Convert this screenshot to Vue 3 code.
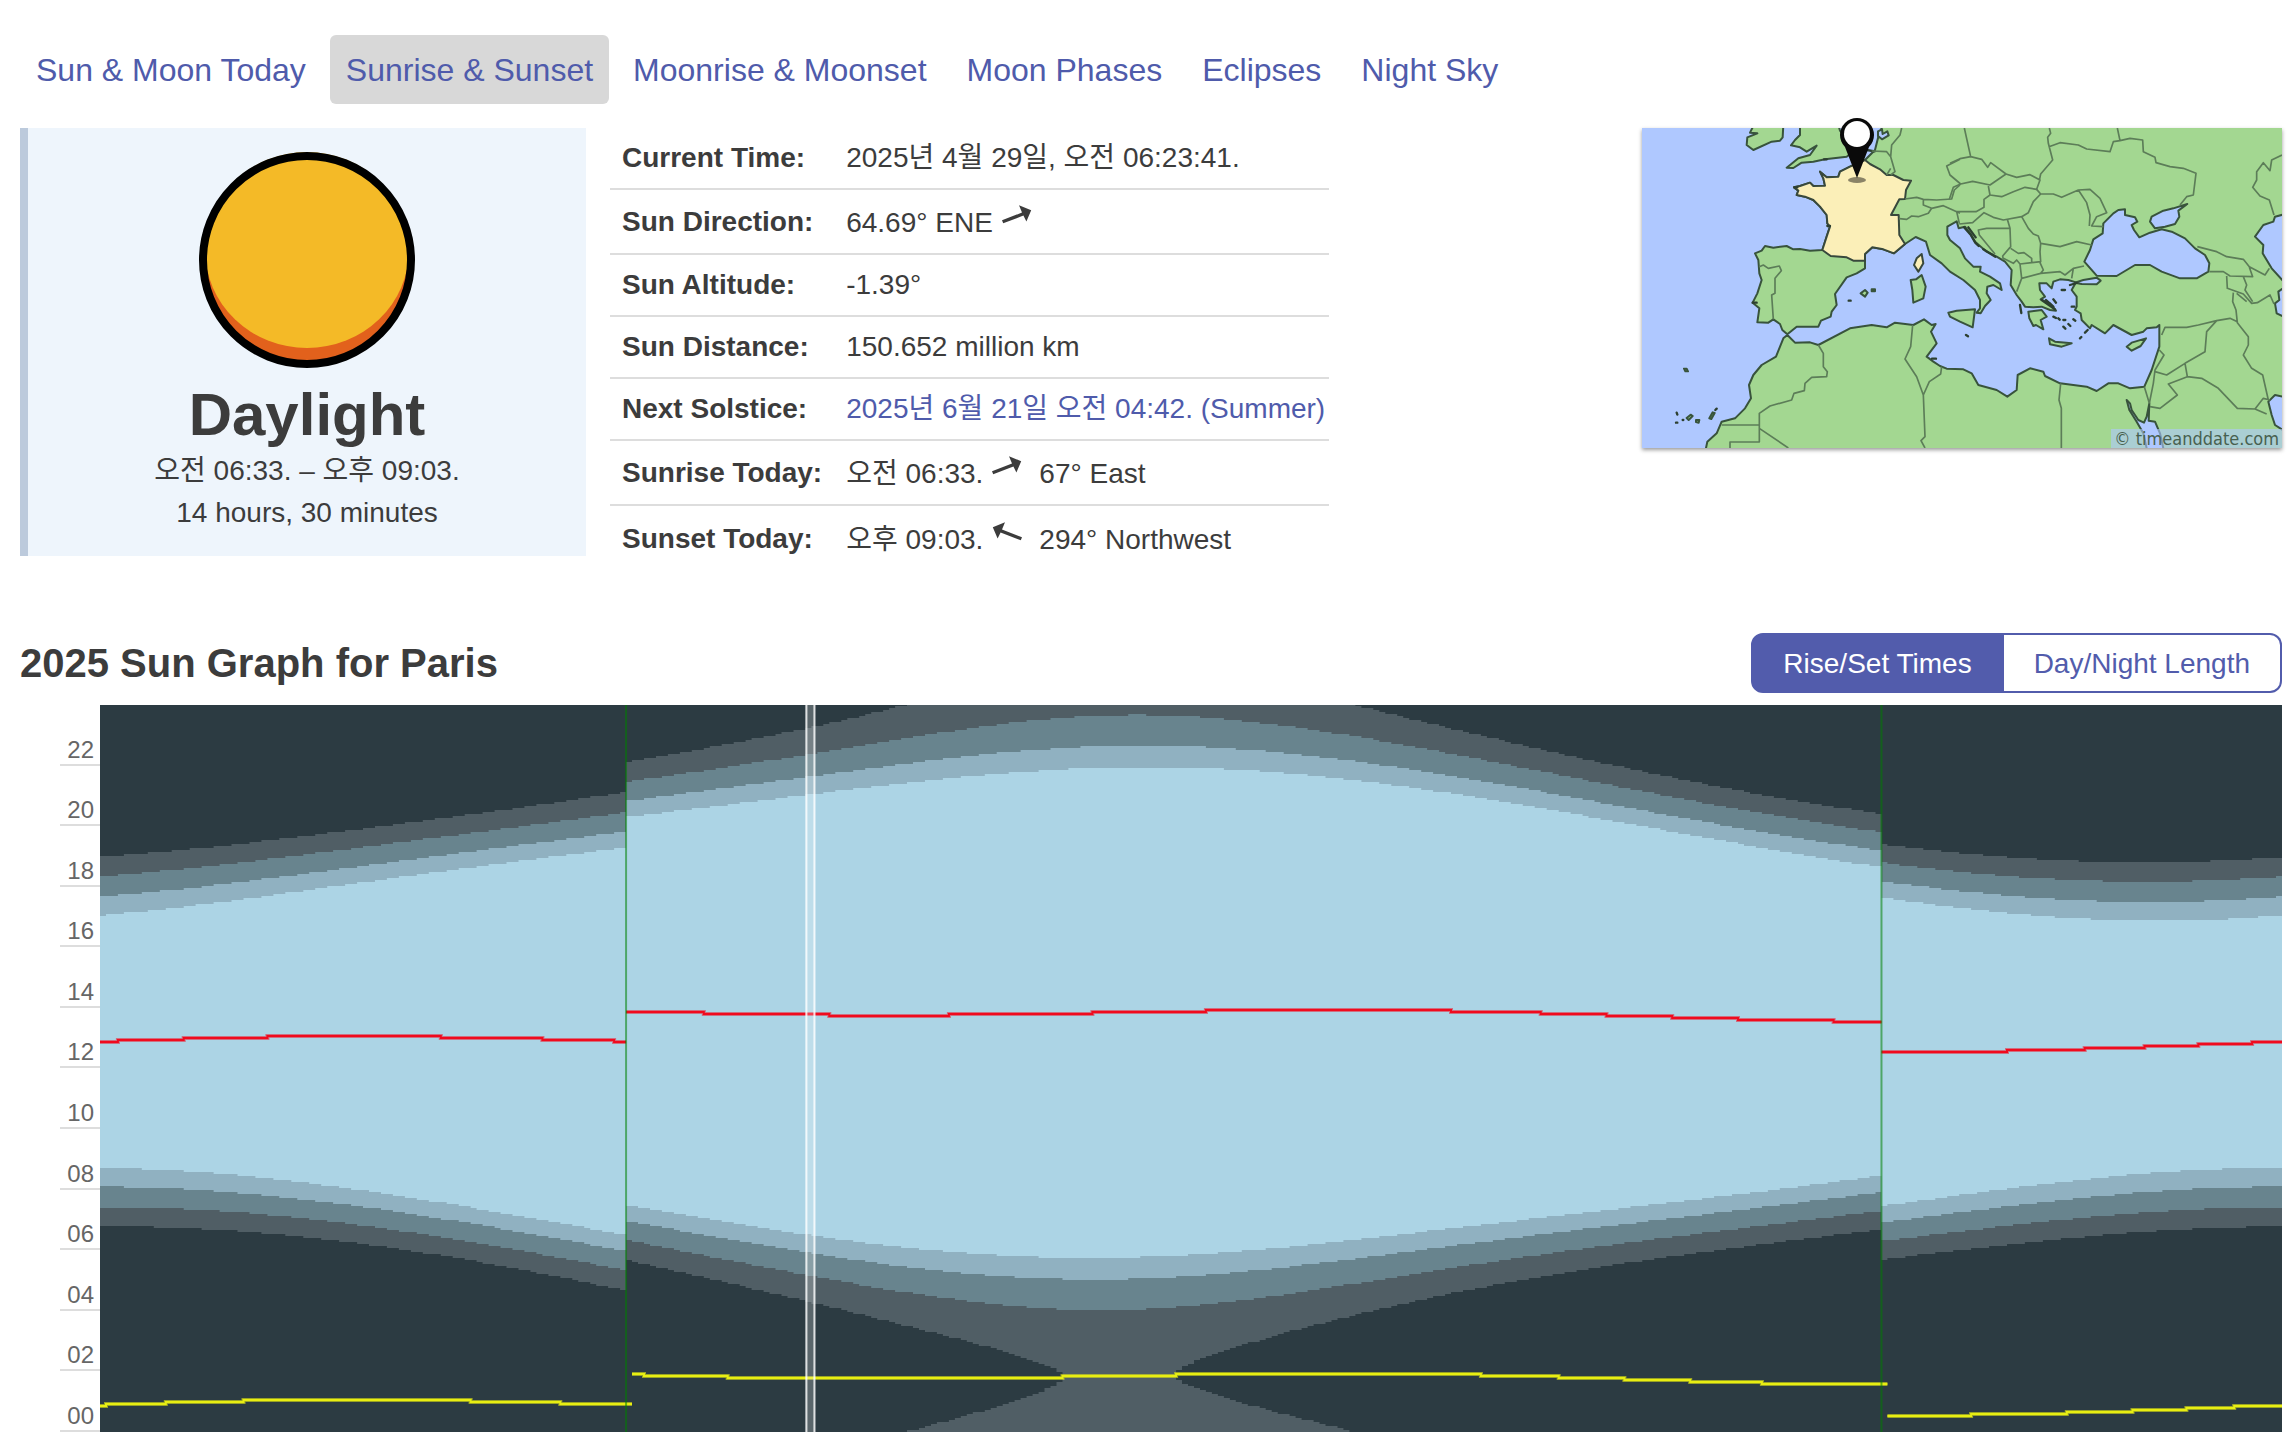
<script setup>
import { ref } from 'vue'

const tabs = ['Sun & Moon Today', 'Sunrise & Sunset', 'Moonrise & Moonset', 'Moon Phases', 'Eclipses', 'Night Sky']
const activeTab = ref('Sunrise & Sunset')

const facts = [
  { label: 'Current Time:', value: '2025년 4월 29일, 오전 06:23:41.' },
  { label: 'Sun Direction:', value: '64.69° ENE', arrow: 'east' },
  { label: 'Sun Altitude:', value: '-1.39°' },
  { label: 'Sun Distance:', value: '150.652 million km' },
  { label: 'Next Solstice:', value: '2025년 6월 21일 오전 04:42. (Summer)', link: true },
  { label: 'Sunrise Today:', value: '오전 06:33.', arrow: 'east', after: '67° East' },
  { label: 'Sunset Today:', value: '오후 09:03.', arrow: 'west', after: '294° Northwest' }
]

const modes = ['Rise/Set Times', 'Day/Night Length']
const mode = ref('Rise/Set Times')
const hours = ['22', '20', '18', '16', '14', '12', '10', '08', '06', '04', '02', '00']

// Sun graph for Paris, one column per day of the year
const W = 2182
const H = 727
const DAYS = 365
const LAT = (48.857 * Math.PI) / 180
const LON = 2.35
const DST_START = 88
const DST_END = 298
const TODAY = 118

const xOf = (d) => (d * W) / DAYS
const yOf = (h) => H - Math.round((h * H) / 48 - 0.3) * 2

function sun(day) {
  const g = (2 * Math.PI * (day + 2)) / 365
  const eq = 229.18 * (0.000075 + 0.001868 * Math.cos(g) - 0.032077 * Math.sin(g) -
    0.014615 * Math.cos(2 * g) - 0.040849 * Math.sin(2 * g))
  const decl = 0.006918 - 0.399912 * Math.cos(g) + 0.070257 * Math.sin(g) -
    0.006758 * Math.cos(2 * g) + 0.000907 * Math.sin(2 * g) -
    0.002697 * Math.cos(3 * g) + 0.00148 * Math.sin(3 * g)
  return { noonUtc: 12 - eq / 60 - LON / 15, decl }
}

function halfDay(decl, altitude) {
  const a = (altitude * Math.PI) / 180
  const c = (Math.sin(a) - Math.sin(LAT) * Math.sin(decl)) / (Math.cos(LAT) * Math.cos(decl))
  if (c <= -1) return 12
  return (Math.acos(c) * 12) / Math.PI
}

const noonOf = (d) => sun(d).noonUtc + (d >= DST_START && d < DST_END ? 2 : 1)

function band(altitude, shift) {
  const top = []
  const bottom = []
  for (let d = 0; d < DAYS; d++) {
    const half = halfDay(sun(d).decl, altitude)
    const noon = noonOf(d) + shift
    const x0 = xOf(d).toFixed(1)
    const x1 = xOf(d + 1).toFixed(1)
    const yt = yOf(noon + half)
    const yb = yOf(noon - half)
    top.push(`${x0} ${yt}`, `${x1} ${yt}`)
    bottom.unshift(`${x1} ${yb}`, `${x0} ${yb}`)
  }
  return `M${top.join('L')}L${bottom.join('L')}Z`
}

const layers = [
  { name: 'astronomical', altitude: -18, fill: '#505e65' },
  { name: 'nautical', altitude: -12, fill: '#68848e' },
  { name: 'civil', altitude: -6, fill: '#90b1c1' },
  { name: 'day', altitude: -0.833, fill: '#acd4e5' }
].map((l) => ({ ...l, d: band(l.altitude, 0) + (l.altitude === -18 ? band(l.altitude, -24) : '') }))

function line(offset, breaks) {
  let path = ''
  for (let d = 0; d < DAYS; d++) {
    const summer = d >= breaks[0] && d < breaks[1] ? 2 : 1
    const y = yOf(sun(d).noonUtc + summer + offset)
    const cmd = d === 0 || breaks.includes(d) ? 'M' : 'L'
    path += `${cmd}${xOf(d).toFixed(1)} ${y}L${xOf(d + 1).toFixed(1)} ${y}`
  }
  return path
}
const noonLine = line(0, [DST_START, DST_END])
const midnightLine = line(-12, [DST_START + 1, DST_END + 1])
</script>

<template>
  <main class="page">
    <nav class="tabs">
      <a v-for="t in tabs" :key="t" href="#" :class="{ active: t === activeTab }" @click.prevent="activeTab = t">{{ t }}</a>
    </nav>

    <section class="overview">
      <div class="card">
        <svg class="sun" viewBox="0 0 216 216" aria-hidden="true">
          <circle cx="108" cy="108" r="104" fill="#e2611c" />
          <ellipse cx="108" cy="98" rx="102" ry="98" fill="#f4ba27" />
          <circle cx="108" cy="108" r="104" fill="none" stroke="#000" stroke-width="8" />
        </svg>
        <h1>Daylight</h1>
        <p>오전 06:33. – 오후 09:03.</p>
        <p>14 hours, 30 minutes</p>
      </div>

      <table class="facts">
        <tbody>
          <tr v-for="f in facts" :key="f.label" :class="{ tall: f.arrow }">
            <th scope="row">{{ f.label }}</th>
            <td>
              <a v-if="f.link" href="#">{{ f.value }}</a>
              <template v-else>{{ f.value }}</template>
              <svg v-if="f.arrow" class="arrow" :class="f.arrow" viewBox="0 0 32 32" aria-hidden="true">
                <path d="M1 20.2L21 12.6L18 5.2L30.2 10.2L25.4 21.4L22.4 15.6L2.2 23.2Z" fill="#3c3c3c" />
              </svg>
              <span v-if="f.after" class="after">{{ f.after }}</span>
            </td>
          </tr>
        </tbody>
      </table>

      <a class="map" href="#" aria-label="Map of Paris">
        <svg class="land" viewBox="66 84 1920 960" aria-hidden="true">
          <rect x="66" y="84" width="1920" height="960" fill="#afc8ff" />
          <g class="coast">
            <path d="M785 84L775 110L765 150L735 180L690 200L660 215L655 230L620 232L600 215L610 235L615 257L580 258L570 248L540 258L522 262L535 272L530 285L555 290L580 300L600 320L620 345L622 370L630 380L620 410L607 450L570 452L540 447L520 448L500 438L460 443L435 438L425 452L405 460L415 480L418 520L425 540L412 580L398 608L418 625L412 667L445 668L460 658L480 672L487 690L502 703L530 680L595 680L603 662L632 650L635 635L650 615L645 582L680 532L710 520L735 505L735 462L757 442L790 448L822 460L855 432L887 411L918 425L930 465L965 490L990 515L1030 540L1065 570L1080 600L1080 625L1070 638L1082 640L1095 618L1112 600L1100 580L1102 560L1120 555L1145 570L1140 550L1110 530L1080 515L1082 500L1060 500L1035 475L1020 445L990 420L982 405L982 380L1010 364L1016 385L1035 380L1050 400L1065 425L1100 455L1130 470L1155 485L1175 510L1172 555L1190 585L1205 605L1215 620L1240 622L1265 620L1290 630L1308 632L1290 610L1262 598L1275 590L1260 570L1258 550L1280 550L1295 565L1300 545L1320 538L1345 540L1368 547L1355 570L1370 590L1370 620L1365 630L1382 640L1385 660L1410 685L1415 675L1455 700L1480 675L1535 705L1570 695L1580 685L1610 682L1618 675L1618 740L1595 810L1573 860L1530 865L1495 850L1465 850L1430 873L1400 860L1320 850L1275 828L1270 815L1230 805L1193 825L1190 870L1162 890L1130 870L1075 855L1055 820L1030 808L980 806L960 798L940 785L920 770L950 730L933 695L947 672L935 675L912 658L880 675L825 668L800 682L755 675L690 685L595 735L570 727L525 728L502 705L490 715L468 770L425 795L400 825L387 855L393 895L375 925L345 955L305 965L290 1000L262 1025L256 1054L1996 1054L1996 74L785 74Z" />
            <path d="M540 74L540 105L525 120L513 136L540 142L560 155L590 137L570 165L535 175L500 203L520 204L545 188L580 185L615 178L680 170L705 150L660 92L655 74Z" />
            <path d="M490 74L488 112L480 122L455 125L400 150L380 135L382 112L412 100L390 98L402 74Z" />
            <path d="M872 540L888 538L905 525L917 560L910 595L880 608L877 570Z" />
            <path d="M985 638L1010 632L1065 628L1058 682L1020 665L990 650Z" />
            <path d="M1225 635L1265 630L1280 650L1262 660L1270 688L1248 675L1240 678L1228 655Z" />
            <path d="M1287 715L1305 725L1355 730L1325 740L1290 733Z" />
            <path d="M1520 740L1535 728L1578 715L1562 738L1535 752Z" />
            <path d="M722 580L735 570L743 578L735 590ZM755 568h10v6h-10ZM192 806l8 0l4 8l-8 0ZM200 954l12-10l6 4l-12 12ZM228 960l10 0l-2 8l-8-2ZM268 955l10-18l6 2l-10 18Z" />
          </g>
          <g class="france">
            <path d="M735 180L690 200L660 215L655 230L620 232L600 215L610 235L615 257L580 258L570 248L540 258L522 262L535 272L530 285L555 290L580 300L600 320L620 345L622 370L630 380L620 410L607 450L632 468L680 472L700 482L735 482L735 462L757 442L790 448L822 460L855 432L838 405L836 345L813 345L838 298L855 297L858 270L873 242L850 240L820 225L800 225L780 208L750 192Z" />
            <path d="M905 462L910 490L895 515L882 495L890 475Z" />
          </g>
          <g class="sea">
            <path d="M1495 330L1515 328L1515 345L1545 352L1552 365L1535 375L1542 390L1558 412L1590 398L1625 388L1655 395L1695 415L1725 445L1755 465L1768 490L1765 515L1730 535L1680 535L1625 515L1590 495L1545 495L1490 528L1430 527L1393 485L1410 450L1420 418L1448 400L1450 370L1480 340Z" />
            <path d="M1595 350L1630 332L1660 325L1702 312L1675 332L1678 350L1665 372L1635 380L1605 385L1590 365Z" />
            <path d="M1365 548L1390 540L1430 533L1442 542L1430 553L1385 552Z" />
            <path d="M1996 342L1965 350L1960 365L1930 375L1905 410L1930 435L1928 460L1955 505L1996 550ZM1996 560L1975 575L1978 600L1965 610L1970 640L1996 652ZM1996 892L1965 885L1945 905L1955 945L1965 975L1996 995Z" />
            <path d="M1520 900L1530 910L1535 930L1555 960L1572 968L1580 950L1588 910L1586 962L1605 965L1620 1000L1632 1054L1582 1054L1570 1000L1550 965L1528 930Z" />
            <path d="M774 94l12-6l2 14l14-8l4 12l-20 12l-12-10Z" />
          </g>
          <g class="islands">
            <path d="M1032 382l20 22l14 24l10 10M1045 382l22 30M1090 448l36 22M1200 615l4 24M1265 600l40 28M1278 600l22 20M1300 598l8 10M1325 570l10 0M1350 555l20-6M1355 620l8 0M1330 660l6 0M1300 650l8 4M1330 680l6 6M1345 672l6 6M1360 658l6 4M1395 698l8-8M1380 715l4-4M1315 655l4 4M1038 705l6 4M524 262l8 0M398 608l12 0M612 178l8 0M622 378l8 0M936 776l12 0M740 150l24 4M170 938l2 6M168 968l4 0M188 960l2 0M286 930l4-4M686 602l6 0" />
          </g>
          <g class="borders">
            <path d="M845 84L840 105L815 135L812 170L825 215L812 225M755 153L800 155L812 170M800 225L812 205M418 500L430 495L445 505L478 498L484 512L465 535L465 580L455 585L460 658" />
            <path d="M855 297L890 292L910 298L950 300L995 297L1003 270L1020 255M910 300L910 315L935 325L925 340L895 350L875 348L860 358L838 356M935 325L970 317L1010 335L1020 340M1020 178L980 198L990 225L1022 252" />
            <path d="M1033 84L1052 170L1020 176L990 190M1052 170L1085 178L1103 202L1112 188L1158 222L1110 255L1058 244L1022 252L1000 262L988 298M1158 222L1190 232L1230 224L1260 240L1250 268L1215 262L1180 275L1145 290L1110 285L1105 258M1288 84L1292 100L1283 112L1285 130L1298 180L1262 222L1258 242M1287 140L1320 128L1375 135L1400 147L1470 155L1480 125L1500 122L1492 84M1500 122L1530 115L1568 120L1570 155L1605 172L1608 188L1650 200L1690 205L1728 220L1720 285L1700 290L1680 315" />
            <path d="M1110 285L1092 298L1092 322L1068 335L1010 335L1018 370M1018 372L1058 368L1092 338L1120 352L1150 360L1205 350L1225 338L1240 305L1262 282L1250 268M1262 282L1300 282L1325 292L1375 270L1410 268L1440 295L1460 338L1430 350L1415 378L1450 380M1375 270L1400 308L1410 345L1408 378M1205 350L1225 385L1240 402L1255 408L1262 430L1320 440L1370 425L1415 435" />
            <path d="M1162 358L1170 385L1100 385L1075 390L1078 405L1125 462M1170 385L1172 440L1148 468L1150 480M1172 445L1195 460L1212 458L1235 475L1235 488L1262 485L1260 455L1262 430M1150 475L1180 490L1190 480L1200 492L1205 535L1190 575M1200 492L1235 488M1205 535L1262 520L1270 510L1260 488M1262 520L1320 515L1335 525L1360 505L1392 498M1360 505L1355 535" />
            <path d="M1732 440L1790 455L1820 470L1870 478L1888 500L1935 525L1948 505M1768 515L1810 515L1830 528L1898 530L1888 502M1820 528L1822 565L1870 582L1895 610L1912 608L1950 585L1962 612M1870 530L1880 555L1875 570L1898 605M1850 580L1880 605M1840 578L1838 605L1848 630L1852 668L1885 710L1885 735L1870 765L1895 805L1928 825L1945 900M1852 665L1830 655L1790 662L1735 675L1700 682L1635 682L1625 705M1790 662L1760 695L1755 755L1695 790L1640 825L1605 815M1695 790L1702 830L1745 835L1795 865L1852 925L1905 927L1930 895L1950 900M1702 830L1645 852L1672 885L1620 925L1590 920M1905 927L1940 942M1618 750L1632 765L1605 810L1600 850L1588 910M1573 860L1588 910" />
            <path d="M1986 165L1955 180L1950 212L1930 188L1910 215L1910 240L1898 262L1920 288L1948 300L1962 345M595 735L610 760L610 800L622 815L620 830L575 832L555 850L553 872L522 880L515 900L450 918L418 940L418 1026L330 1026L330 1044M305 975L418 975M418 985L505 1044M878 675L872 740L855 777L890 830L910 885L915 1010L903 1022L915 1044M910 885L928 845L962 822L965 800M1322 850L1317 900L1324 925L1324 1044" />
          </g>
        </svg>
        <span class="credit">© timeanddate.com</span>
        <svg class="pin" viewBox="0 0 36 68" aria-hidden="true">
          <ellipse cx="18" cy="64" rx="9" ry="3" fill="#8a8366" />
          <path d="M18 62L6 31A17 17 0 1 1 30 31Z" fill="#0a0a0a" />
          <circle cx="18" cy="18" r="13" fill="#fff" />
        </svg>
      </a>
    </section>

    <header class="graph-head">
      <h2>2025 Sun Graph for Paris</h2>
      <div class="toggle" role="group" aria-label="Graph mode">
        <button v-for="m in modes" :key="m" type="button" :class="{ on: m === mode }" @click="mode = m">{{ m }}</button>
      </div>
    </header>

    <section class="graph">
      <div class="axis">
        <span v-for="h in hours" :key="h">{{ h }}</span>
      </div>
      <svg class="plot" :viewBox="`0 0 ${W} ${H}`" preserveAspectRatio="none" role="img" aria-label="Daylight and twilight through 2025">
        <rect :width="W" :height="H" fill="#2c3b42" />
        <path v-for="l in layers" :key="l.name" :d="l.d" :fill="l.fill" />
        <g fill="none">
          <path :d="noonLine" stroke="#f00a1e" stroke-opacity="0.5" stroke-width="4" />
          <path :d="noonLine" stroke="#f00a1e" stroke-width="2" />
          <path :d="midnightLine" stroke="#e4ea12" stroke-opacity="0.6" stroke-width="4" />
          <path :d="midnightLine" stroke="#e8ee12" stroke-width="2" />
        </g>
        <g fill="#008000" fill-opacity="0.55">
          <rect :x="xOf(DST_START) - 1" width="2" :height="H" />
          <rect :x="xOf(DST_END) - 1" width="2" :height="H" />
        </g>
        <rect :x="xOf(TODAY)" width="10" :height="H" fill="#fff" fill-opacity="0.22" />
        <g fill="#fff" fill-opacity="0.8">
          <rect :x="xOf(TODAY)" width="2" :height="H" />
          <rect :x="xOf(TODAY) + 8" width="2" :height="H" />
        </g>
      </svg>
    </section>
  </main>
</template>

<style>
body {
  margin: 0;
  background: #fff;
}
</style>

<style scoped>
.page {
  box-sizing: border-box;
  padding: 35px 8px 0 20px;
  font-family: "Liberation Sans", "Noto Sans CJK KR", sans-serif;
  font-size: 28px;
  line-height: 42px;
  color: #3c3c3c;
}
a {
  color: #4f5bab;
  text-decoration: none;
}
.tabs {
  display: flex;
  gap: 8px;
  margin-bottom: 24px;
}
.tabs a {
  padding: 11px 16px 9px;
  font-size: 32px;
  line-height: 49px;
  border-radius: 6px;
}
.tabs a.active {
  background: #d8d8d8;
}
.overview {
  display: flex;
  align-items: flex-start;
}
.card {
  box-sizing: border-box;
  width: 566px;
  padding: 24px 0 22px;
  border-left: 8px solid #bccadc;
  background: #eef5fc;
  text-align: center;
}
.sun {
  display: block;
  width: 216px;
  height: 216px;
  margin: 0 auto;
}
h1, h2, p {
  margin: 0;
}
h1 {
  margin-top: 12px;
  font-size: 60px;
  line-height: 70px;
}
.facts {
  margin-left: 24px;
  border-collapse: separate;
  border-spacing: 0;
}
.facts th,
.facts td {
  box-sizing: border-box;
  height: 62px;
  padding: 9px 12px;
  border-bottom: 2px solid #ddd;
  text-align: left;
  white-space: nowrap;
}
.facts td {
  padding-right: 4px;
}
.facts tr.tall th,
.facts tr.tall td {
  height: 65px;
}
.facts tr:last-child th,
.facts tr:last-child td {
  border-bottom: 0;
}
.arrow {
  width: 32px;
  height: 32px;
  margin-left: 8px;
}
.arrow.west {
  transform: scaleX(-1);
}
.after {
  margin-left: 16px;
}
.map {
  position: relative;
  display: block;
  width: 640px;
  margin-left: auto;
  box-shadow: 0 2px 4px rgba(0, 0, 0, 0.4);
}
.land {
  display: block;
  width: 100%;
}
.coast path {
  fill: #a3d791;
  stroke: #38533c;
  stroke-width: 6;
  stroke-linejoin: round;
}
.france path {
  fill: #fbefb8;
  stroke: #38483c;
  stroke-width: 6;
  stroke-linejoin: round;
}
.sea path {
  fill: #afc8ff;
  stroke: #38533c;
  stroke-width: 6;
  stroke-linejoin: round;
}
.islands path {
  fill: none;
  stroke: #2c3f30;
  stroke-width: 7;
  stroke-linecap: round;
}
.borders path {
  fill: none;
  stroke: #5c7d58;
  stroke-width: 5;
  stroke-linejoin: round;
}
.credit {
  position: absolute;
  right: 0;
  bottom: 0;
  padding: 0 3px;
  background: rgba(175, 200, 255, 0.6);
  color: #47604f;
  font: 18px/19px "DejaVu Sans Condensed", "DejaVu Sans", sans-serif;
}
.pin {
  position: absolute;
  left: 197px;
  top: -12px;
  width: 36px;
  height: 68px;
}
.graph-head {
  display: flex;
  align-items: center;
  justify-content: space-between;
  margin: 62px 0 12px;
}
h2 {
  font-size: 40px;
  line-height: 60px;
}
.toggle {
  display: flex;
}
.toggle button {
  height: 60px;
  padding: 1px 30px 0;
  border: 2px solid #525cac;
  background: #fff;
  color: #525cac;
  font: inherit;
}
.toggle button.on {
  background: #525cac;
  color: #fff;
}
.toggle button:first-child {
  border-radius: 12px 0 0 12px;
}
.toggle button:last-child {
  border-left: 0;
  border-radius: 0 12px 12px 0;
}
.graph {
  display: flex;
  margin-left: 40px;
}
.axis {
  display: flex;
  flex-direction: column;
  width: 40px;
}
.axis span {
  box-sizing: border-box;
  display: flex;
  flex: 1;
  align-items: flex-end;
  justify-content: flex-end;
  padding-right: 6px;
  border-bottom: 2px solid #ddd;
  color: #666;
  font-size: 24px;
  line-height: 28px;
}
.plot {
  display: block;
  flex: 1;
  min-width: 0;
  height: 727px;
}
</style>
